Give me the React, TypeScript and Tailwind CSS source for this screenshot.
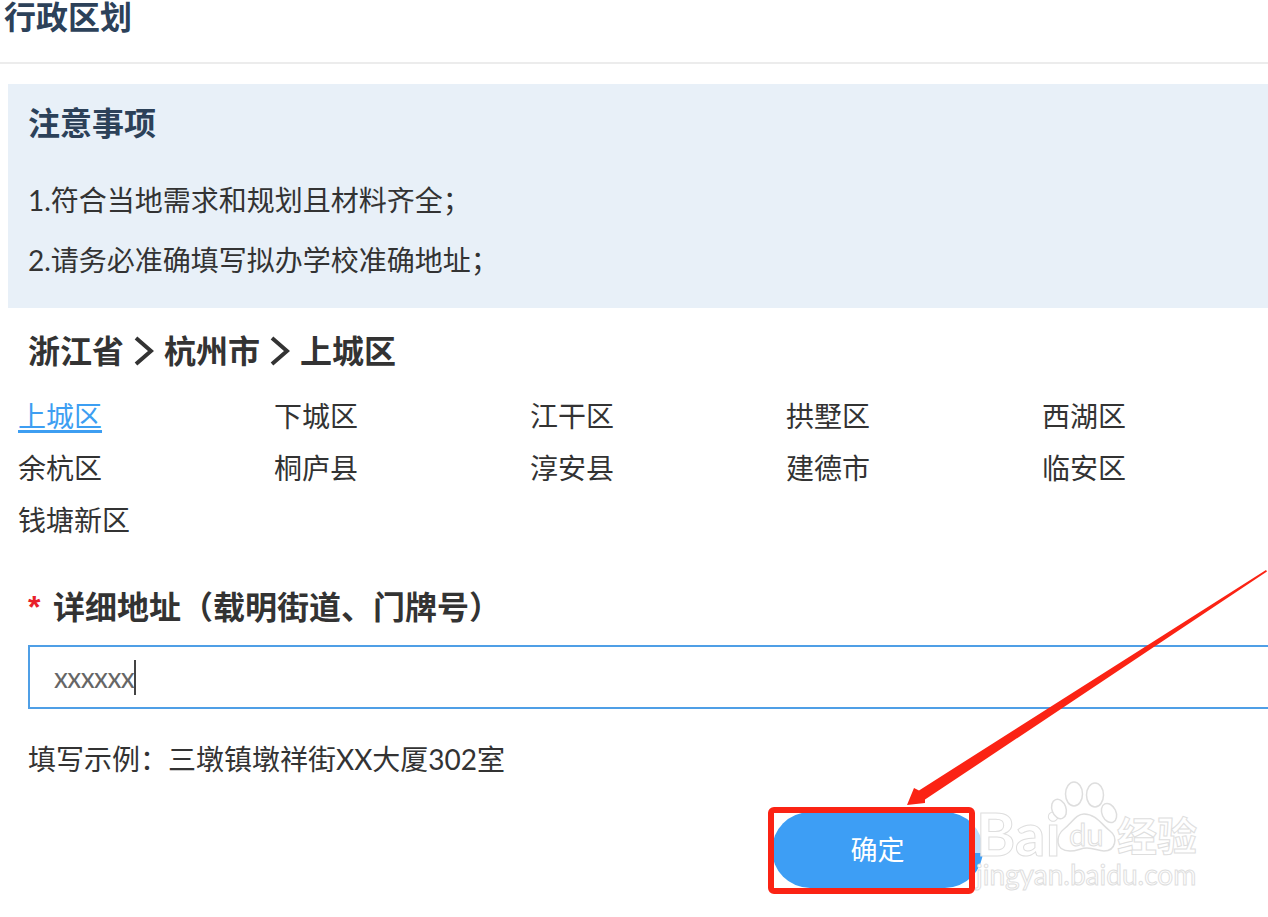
import React from 'react';

const cjk = "font-['Lato','Noto_Sans_CJK_SC',sans-serif]";

const districts = ['上城区', '下城区', '江干区', '拱墅区', '西湖区', '余杭区', '桐庐县', '淳安县', '建德市', '临安区', '钱塘新区'];

const Chevron = () => (
  <svg width="20" height="30" viewBox="0 0 20 30" fill="none" stroke="#333" strokeWidth="4" className="mx-[10px]">
    <path d="M2 2 L17 15 L2 28" />
  </svg>
);

const App = () => {
  return (
    <div className={`relative w-[1268px] h-[917px] overflow-hidden bg-white ${cjk}`}>
      {/* Title */}
      <div className="h-[64px] border-b-2 border-[#ececec] pl-[4px]">
        <h1 className="font-['Liberation_Sans','Noto_Sans_CJK_SC',sans-serif] text-[32px] leading-[37px] font-bold text-[#2c4159]">行政区划</h1>
      </div>

      {/* Notice */}
      <div className="mt-[20px] ml-[8px] h-[224px] bg-[#e8f0f8] pl-[20px] pt-[19px]">
        <h2 className="text-[32px] leading-[40px] font-bold text-[#2c4159]">注意事项</h2>
        <p className="mt-[27px] text-[28px] leading-[60px] text-[#333]">1.符合当地需求和规划且材料齐全；</p>
        <p className="text-[28px] leading-[60px] text-[#333]">2.请务必准确填写拟办学校准确地址；</p>
      </div>

      {/* Breadcrumb */}
      <div className="mt-[23px] ml-[28px] flex items-center text-[32px] leading-[40px] font-bold text-[#333]">
        <span>浙江省</span>
        <Chevron />
        <span>杭州市</span>
        <Chevron />
        <span>上城区</span>
      </div>

      {/* Districts */}
      <div className="mt-[19px] ml-[18px] grid grid-cols-[256px_256px_256px_256px_256px] auto-rows-[52px] text-[28px] leading-[52px] text-[#333]">
        {districts.map((d, i) => (
          <span key={d} className={i === 0 ? 'text-[#3d9ef2] underline decoration-[3px] underline-offset-[3px]' : ''}>
            {d}
          </span>
        ))}
      </div>

      {/* Address */}
      <div className="mt-[39px] ml-[28px] flex items-center text-[32px] leading-[44px] font-bold text-[#333]">
        <span className="w-[25px] font-['Liberation_Sans'] text-[#e8202a]">*</span>
        <span>详细地址（载明街道、门牌号）</span>
      </div>
      <div className="mt-[16px] ml-[28px] flex h-[64px] items-center border-2 border-r-0 border-[#4f9fe6] pl-[24px] text-[28px] text-[#666]">
        <span className="tracking-[-0.6px]">xxxxxx</span>
        <span className="h-[35px] w-[2px] bg-[#444]" />
      </div>
      <p className="mt-[28px] ml-[28px] text-[28px] leading-[44px] text-[#333]">填写示例：三墩镇墩祥街XX大厦302室</p>

      {/* Submit */}
      <div className="mt-[31px] ml-[772px]">
        <button className="h-[76px] w-[211px] rounded-[38px] bg-[#3d9ef5] text-[27px] text-white">确定</button>
      </div>

      {/* Watermark */}
      <div className="absolute left-[975px] top-[812px] h-[41px] w-[10px] bg-white/65" />
      <div className="absolute left-[976px] top-[808px] text-[60px] leading-[50px] font-bold text-white [-webkit-text-stroke:1px_#dedede]">Bai</div>
      <svg className="absolute left-[1050px] top-[775px]" width="70" height="80" viewBox="0 0 70 80" fill="white" stroke="#dedede" strokeWidth="1.5">
        <ellipse cx="24" cy="19" rx="8.5" ry="12" />
        <ellipse cx="45" cy="20" rx="8.5" ry="12" />
        <ellipse cx="9" cy="34" rx="7" ry="10" transform="rotate(-20 9 34)" />
        <ellipse cx="59" cy="38" rx="7" ry="10" transform="rotate(-25 59 38)" />
        <path d="M34 39 C26 39 22 48 14 54 C6 60 4 76 20 76 C28 76 30 73 37 73 C44 73 48 76 54 76 C66 76 68 62 60 56 C52 50 46 39 34 39 Z" />
      </svg>
      <div className="absolute left-[1069px] top-[816px] text-[31px] leading-[36px] text-white [-webkit-text-stroke:1px_#dedede]">du</div>
      <div className="absolute left-[1117px] top-[812px] text-[40px] leading-[48px] font-bold text-white [-webkit-text-stroke:1px_#dedede]">经验</div>
      <div className="absolute left-[976px] top-[860px] text-[28px] leading-[28px] text-white [-webkit-text-stroke:1px_#dedede]">jingyan.baidu.com</div>

      {/* Annotation */}
      <div className="absolute left-[768px] top-[807px] h-[87px] w-[207px] rounded-[6px] border-[6px] border-[#fb2314]" />
      <svg className="absolute left-0 top-0" width="1268" height="917" viewBox="0 0 1268 917">
        <polygon points="1266,570 1267,571.5 925,799.6 925,803 907,805 914,788 919,790.4" fill="#fb2314" />
      </svg>
    </div>
  );
};

export default App;
